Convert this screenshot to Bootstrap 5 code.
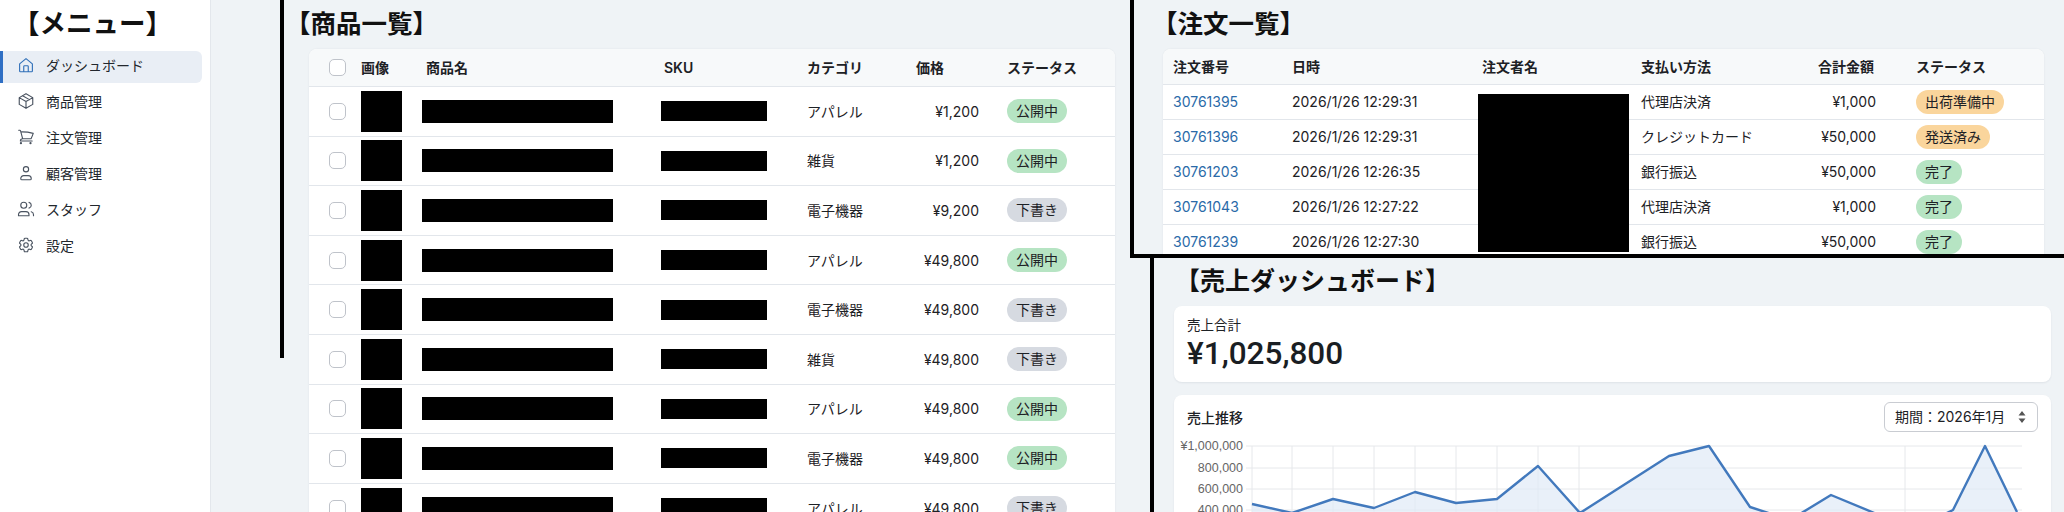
<!DOCTYPE html>
<html lang="ja">
<head>
  <meta charset="UTF-8">
  <link href="https://cdn.jsdelivr.net/npm/bootstrap@5.3.0/dist/css/bootstrap.min.css" rel="stylesheet">
  <title>管理画面</title>
  <style>
    html, body { height: 512px; overflow: hidden; }
    body { background: #eff3f6; color: #1d2125; font-family: Inter, "Noto Sans CJK JP", sans-serif; font-size: 14px; }
    .panel-title { font-family: "Liberation Sans", "Noto Sans CJK JP", sans-serif; font-size: 25.5px; font-weight: 700; line-height: 34px; color: #111; margin: 0; white-space: nowrap; }

    .side-menu { width: 211px; height: 512px; background: #fff; border-right: 1px solid #e3e7ec; flex: none; }
    .side-menu .panel-title { padding: 7px 0 0 13px; height: 51px; font-size: 26.5px; }
    .side-link { height: 32px; width: 202px; padding: 0 0 4px 17px; gap: 11px; margin-bottom: 4px; color: #22272d; border-radius: 0 6px 6px 0; text-decoration: none; }
    .side-link svg { width: 18px; height: 18px; flex: none; fill: none; stroke: #4a5360; stroke-width: 1.5; stroke-linecap: round; stroke-linejoin: round; }
    .side-link.is-current { background: #e9eef5; box-shadow: inset 3px 0 0 #2f6fc4; }
    .side-link.is-current svg { stroke: #2f6fb8; }

    .goods-zone { width: 919px; padding-left: 69px; flex: none; }
    .goods-panel { position: relative; height: 512px; }
    .goods-line { position: absolute; left: 0; top: 0; width: 4px; height: 358px; background: #000; }
    .goods-panel .panel-title { padding: 7px 0 0 5px; height: 49px; }

    .right-zone { flex: 1 1 auto; min-width: 0; }
    .orders-panel { height: 258px; border-left: 4px solid #000; border-bottom: 4px solid #000; overflow: hidden; }
    .orders-panel .panel-title { padding: 7px 0 0 18px; height: 49px; }
    .sales-panel { height: 254px; margin-left: 20px; border-left: 4px solid #000; overflow: hidden; padding: 0 13px 0 20px; }
    .sales-panel .panel-title { padding: 6px 0 0 1px; height: 48px; font-size: 25px; }

    .sheet { background: #fff; border-radius: 8px 8px 0 0; box-shadow: 0 0 2px rgba(30,40,60,.08); overflow: hidden; }
    .goods-sheet { width: 806px; margin-left: 29px; }
    .orders-sheet { width: 881px; margin-left: 29px; }
    .sheet table { table-layout: fixed; margin: 0; width: 100%; }
    .sheet th, .sheet td { padding: 0 0 0 8px; vertical-align: middle; white-space: nowrap; color: #1d2125; border-bottom: 1px solid #e2e6eb; }
    .sheet th { background: #f7f9fa; font-weight: 600; font-size: 14px; }
    .goods-sheet th { height: 37.5px; padding-bottom: 1px; }
    .goods-sheet td { height: 49.6px; }
    .orders-sheet th { height: 35px; padding-left: 10px; }
    .orders-sheet td { height: 35px; padding-left: 10px; }
    .orders-sheet .cost, .goods-sheet .cost { text-align: right; }
    .goods-sheet td.cost { padding-right: 20px; }
    .orders-sheet td.cost { padding-right: 30px; }
    .orders-sheet th.cost { padding-right: 32px; }
    .orders-sheet a { color: #2a6aa8; text-decoration: none; }
    .sheet .form-check-input { width: 17px; height: 17px; margin: 0 0 0 12px; border-color: #bfc3ca; border-radius: 5px; display: block; }
    .black-thumb { width: 41px; height: 41px; background: #000; }
    .black-name { width: 191px; height: 23px; background: #000; margin-left: -4px; }
    .black-sku { width: 106px; height: 20px; background: #000; margin-left: -3px; }
    .customer-cell { position: relative; }
    .black-customer { position: absolute; left: 6px; top: 9px; width: 151px; height: 158px; background: #000; z-index: 1; }

    .pill { display: inline-block; border-radius: 12px; height: 24px; line-height: 24px; padding: 0 9px; font-size: 14px; color: #1d2125; }
    .pill-green { background: #b6e4c3; }
    .pill-grey { background: #d6dae1; }
    .pill-orange { background: #fad59c; }

    .board { background: #fff; border-radius: 8px; box-shadow: 0 1px 2px rgba(30,40,60,.08); }
    .total-board { height: 76px; padding: 11px 13px; margin-bottom: 13px; }
    .total-label { font-size: 13.5px; line-height: 17px; }
    .total-num { font-family: Roboto, sans-serif; font-size: 31.5px; font-weight: 500; line-height: 40px; color: #1a1e23; }
    .trend-board { height: 130px; padding: 7px 13px 0; }
    .trend-label { font-size: 14px; font-weight: 500; }
    .period-select { width: 154px; height: 30px; font-size: 14px; padding: 0 10px; line-height: 28px; border-color: #c9ccd2; border-radius: 6px; color: #1d2125; background-size: 8px 14px; background-position: right 11px center; background-image: url("data:image/svg+xml,%3csvg xmlns='http://www.w3.org/2000/svg' viewBox='0 0 8 14'%3e%3cpath fill='%23555' d='M4 1 7.5 5.500h-7zM4 13 .5 8.500h7z'/%3e%3c/svg%3e"); }
    .trend-svg { display: block; margin: 8px 0 0 -12px; }
    .trend-svg text { font-family: "Liberation Sans", sans-serif; font-size: 12.5px; fill: #666; text-anchor: end; }
  </style>
</head>

<body class="d-flex">

<aside class="side-menu">
  <h2 class="panel-title">【メニュー】</h2>
  <nav class="nav flex-column">
    <a class="side-link is-current d-flex align-items-center" href="#">
      <svg viewBox="0 0 24 24"><path d="M3.500 10.500 12 3.500l8.500 7V20a1 1 0 0 1-1 1h-15a1 1 0 0 1-1-1zM9 21v-7a1 1 0 0 1 1-1h4a1 1 0 0 1 1 1v7"/></svg>
      ダッシュボード</a>
    <a class="side-link d-flex align-items-center" href="#">
      <svg viewBox="0 0 24 24"><path d="m21 7.500-9-5.250L3 7.500m18 0-9 5.250m9-5.250v9l-9 5.250M3 7.500l9 5.250M3 7.500v9l9 5.250m0-9v9M7.500 4.900l9 5.250"/></svg>
      商品管理</a>
    <a class="side-link d-flex align-items-center" href="#">
      <svg viewBox="0 0 24 24"><path d="M2.250 3h1.386c.51 0 .955.343 1.087.835l.383 1.437M7.500 14.250a3 3 0 0 0-3 3h15.750m-12.750-3h11.218c1.121-2.300 2.100-4.684 2.924-7.138a60.114 60.114 0 0 0-16.536-1.840M7.500 14.250 5.106 5.272M6 20.250a.75.75 0 1 1-1.500 0 .75.75 0 0 1 1.500 0Zm12.750 0a.75.75 0 1 1-1.500 0 .75.75 0 0 1 1.500 0Z"/></svg>
      注文管理</a>
    <a class="side-link d-flex align-items-center" href="#">
      <svg viewBox="0 0 24 24"><circle cx="12" cy="7" r="3.500"/><path d="M5 19.500a4 4 0 0 1 4-4h6a4 4 0 0 1 4 4 1.500 1.500 0 0 1-1.500 1.500h-11A1.500 1.500 0 0 1 5 19.500z"/></svg>
      顧客管理</a>
    <a class="side-link d-flex align-items-center" href="#">
      <svg viewBox="0 0 24 24"><circle cx="9" cy="7" r="4"/><path d="M2 21v-1.500a4 4 0 0 1 4-4h6a4 4 0 0 1 4 4V21zM22 21v-1.500a4 4 0 0 0-3-3.870M16 3.130a4 4 0 0 1 0 7.750"/></svg>
      スタッフ</a>
    <a class="side-link d-flex align-items-center" href="#">
      <svg viewBox="0 0 24 24"><path d="M9.594 3.940c.09-.542.56-.94 1.110-.94h2.593c.55 0 1.020.398 1.110.94l.213 1.281c.063.374.313.686.645.870.074.04.147.083.22.127.325.196.72.257 1.075.124l1.217-.456a1.125 1.125 0 0 1 1.370.49l1.296 2.247a1.125 1.125 0 0 1-.26 1.431l-1.003.827c-.293.241-.438.613-.43.992a7.723 7.723 0 0 1 0 .255c-.008.378.137.75.43.991l1.004.827c.424.35.534.955.26 1.430l-1.298 2.247a1.125 1.125 0 0 1-1.369.491l-1.217-.456c-.355-.133-.75-.072-1.076.124a6.470 6.470 0 0 1-.22.128c-.331.183-.581.495-.644.869l-.213 1.281c-.09.543-.56.94-1.110.94h-2.594c-.55 0-1.019-.398-1.110-.94l-.213-1.281c-.062-.374-.312-.686-.644-.87a6.520 6.520 0 0 1-.22-.127c-.325-.196-.72-.257-1.076-.124l-1.217.456a1.125 1.125 0 0 1-1.369-.49l-1.297-2.247a1.125 1.125 0 0 1 .26-1.431l1.004-.827c.292-.24.437-.613.43-.991a6.932 6.932 0 0 1 0-.255c.007-.38-.138-.751-.43-.992l-1.004-.827a1.125 1.125 0 0 1-.26-1.430l1.297-2.247a1.125 1.125 0 0 1 1.370-.491l1.216.456c.356.133.751.072 1.076-.124.072-.044.146-.086.22-.128.332-.183.582-.495.644-.869l.214-1.280Z"/><path d="M15 12a3 3 0 1 1-6 0 3 3 0 0 1 6 0Z"/></svg>
      設定</a>
  </nav>
</aside>

<section class="goods-zone">
  <div class="goods-panel">
    <div class="goods-line"></div>
    <h2 class="panel-title">【商品一覧】</h2>
    <div class="sheet goods-sheet">
      <table class="table">
        <colgroup>
          <col style="width:44px"><col style="width:65px"><col style="width:238px"><col style="width:143px">
          <col style="width:109px"><col style="width:91px"><col style="width:116px">
        </colgroup>
        <thead>
          <tr>
            <th><input class="form-check-input" type="checkbox"></th>
            <th>画像</th><th>商品名</th><th>SKU</th><th>カテゴリ</th><th>価格</th><th>ステータス</th>
          </tr>
        </thead>
        <tbody id="goodsRows"></tbody>
      </table>
    </div>
  </div>
</section>

<section class="right-zone">
  <div class="orders-panel">
    <h2 class="panel-title">【注文一覧】</h2>
    <div class="sheet orders-sheet">
      <table class="table">
        <colgroup>
          <col style="width:119px"><col style="width:190px"><col style="width:159px"><col style="width:149px">
          <col style="width:126px"><col style="width:138px">
        </colgroup>
        <thead>
          <tr><th>注文番号</th><th>日時</th><th>注文者名</th><th>支払い方法</th><th class="cost">合計金額</th><th>ステータス</th></tr>
        </thead>
        <tbody id="orderRows"></tbody>
      </table>
    </div>
  </div>

  <div class="sales-panel">
    <h2 class="panel-title">【売上ダッシュボード】</h2>
    <div class="board total-board">
      <div class="total-label">売上合計</div>
      <div class="total-num">¥1,025,800</div>
    </div>
    <div class="board trend-board">
      <div class="d-flex justify-content-between align-items-center">
        <span class="trend-label">売上推移</span>
        <select class="form-select period-select"><option>期間：2026年1月</option></select>
      </div>
      <svg class="trend-svg" width="860" height="80" viewBox="1175 440 860 80">
        <g stroke="#e6e8eb" stroke-width="1" fill="none">
          <path d="M1246 446H2022M1246 468H2022M1246 489H2022M1246 510H2022"/>
          <path d="M1252 446V520M1292 446V520M1333 446V520M1374 446V520M1415 446V520M1456 446V520M1497 446V520M1538 446V520M1579 446V520M1905 446V520"/>
        </g>
        <text x="1243" y="450">¥1,000,000</text>
        <text x="1243" y="472">800,000</text>
        <text x="1243" y="493">600,000</text>
        <text x="1243" y="514">400,000</text>
        <path fill="#dfeaf7" fill-opacity=".7" d="M1252 504 1292 513 1333 499 1374 508 1415 492 1456 503 1497 499 1538 466 1580 513 1669 456 1709 446 1750 507 1790 520 1831 495 1872 512 1912 530 1953 510 1985 446 2017 512 2017 530H1252Z"/>
        <path fill="none" stroke="#4279bd" stroke-width="2.400" stroke-linejoin="round" d="M1252 504 1292 513 1333 499 1374 508 1415 492 1456 503 1497 499 1538 466 1580 513 1669 456 1709 446 1750 507 1790 520 1831 495 1872 512 1912 530 1953 510 1985 446 2017 512"/>
      </svg>
    </div>
  </div>
</section>

<script>
  const goods = [
    ["アパレル", "¥1,200", "公開中"],
    ["雑貨", "¥1,200", "公開中"],
    ["電子機器", "¥9,200", "下書き"],
    ["アパレル", "¥49,800", "公開中"],
    ["電子機器", "¥49,800", "下書き"],
    ["雑貨", "¥49,800", "下書き"],
    ["アパレル", "¥49,800", "公開中"],
    ["電子機器", "¥49,800", "公開中"],
    ["アパレル", "¥49,800", "下書き"]
  ];
  const orders = [
    ["30761395", "2026/1/26 12:29:31", "代理店決済", "¥1,000", "出荷準備中", "orange"],
    ["30761396", "2026/1/26 12:29:31", "クレジットカード", "¥50,000", "発送済み", "orange"],
    ["30761203", "2026/1/26 12:26:35", "銀行振込", "¥50,000", "完了", "green"],
    ["30761043", "2026/1/26 12:27:22", "代理店決済", "¥1,000", "完了", "green"],
    ["30761239", "2026/1/26 12:27:30", "銀行振込", "¥50,000", "完了", "green"]
  ];

  document.getElementById("goodsRows").innerHTML = goods.map(g => `
    <tr>
      <td><input class="form-check-input" type="checkbox"></td>
      <td><div class="black-thumb"></div></td>
      <td><div class="black-name"></div></td>
      <td><div class="black-sku"></div></td>
      <td>${g[0]}</td>
      <td class="cost">${g[1]}</td>
      <td><span class="pill ${g[2] === "公開中" ? "pill-green" : "pill-grey"}">${g[2]}</span></td>
    </tr>`).join("");

  document.getElementById("orderRows").innerHTML = orders.map((o, i) => `
    <tr>
      <td><a href="#">${o[0]}</a></td>
      <td>${o[1]}</td>
      <td class="customer-cell">${i === 0 ? '<div class="black-customer"></div>' : ""}</td>
      <td>${o[2]}</td>
      <td class="cost">${o[3]}</td>
      <td><span class="pill pill-${o[5]}">${o[4]}</span></td>
    </tr>`).join("");
</script>

<script src="https://cdn.jsdelivr.net/npm/bootstrap@5.3.0/dist/js/bootstrap.bundle.min.js"></script>
</body>
</html>
